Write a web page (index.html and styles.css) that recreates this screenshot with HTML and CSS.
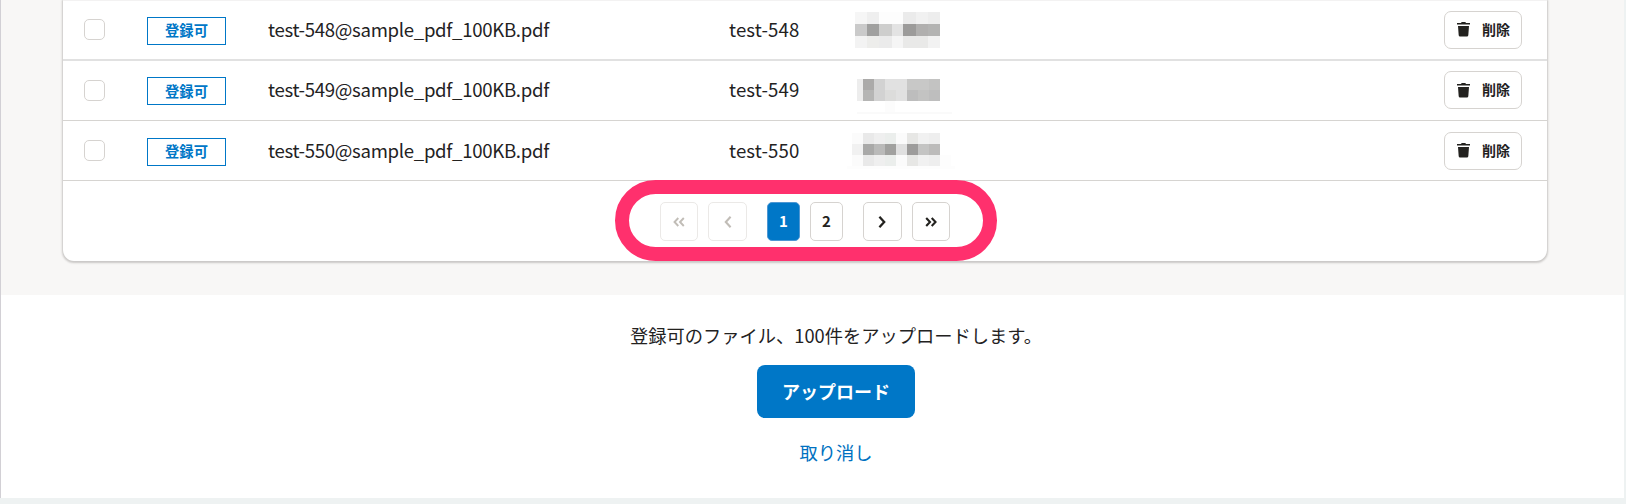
FILE: index.html
```html
<!DOCTYPE html>
<html lang="ja">
<head>
<meta charset="utf-8">
<title>アップロード</title>
<link rel="stylesheet" href="styles.css">
</head>
<body>
<svg class="defs" width="0" height="0">
  <symbol id="trash" viewBox="0 0 13 15"><path d="M0 1h4l.7-1h3.600L9 1h4v1.600H0zM1 4h11l-.7 9.200q-.1 1.400-1.400 1.400H3.100q-1.300 0-1.400-1.400z" fill="currentColor"/></symbol>
  <symbol id="left" viewBox="0 0 8 12"><path d="M6.600 .8 1.800 6l4.800 5.200" fill="none" stroke="currentColor" stroke-width="2.100"/></symbol>
  <symbol id="right" viewBox="0 0 8 12"><path d="M1.400 .8 6.200 6l-4.800 5.200" fill="none" stroke="currentColor" stroke-width="2.300"/></symbol>
  <symbol id="first" viewBox="0 0 12 10"><path d="M5.300 1 1.500 5l3.800 4M10.800 1 7 5l3.800 4" fill="none" stroke="currentColor" stroke-width="1.900"/></symbol>
  <symbol id="last" viewBox="0 0 12 10"><path d="M1.200 1 5 5 1.200 9M6.700 1l3.800 4-3.800 4" fill="none" stroke="currentColor" stroke-width="2.100"/></symbol>
</svg>
<main class="page">
  <section class="list">
    <div class="card">
      <div class="row">
        <div><span class="check"></span></div>
        <div><span class="badge">登録可</span></div>
        <div class="file">test-548@sample_pdf_100KB.pdf</div>
        <div class="name">test-548</div>
        <div class="masked">
          <svg width="85" height="36" viewBox="0 0 85 36" shape-rendering="crispEdges">
            <path fill="#f6f6f6" d="M0 0h12v12H0z"/><path fill="#efefef" d="M12 0h12v12H12z"/><path fill="#fdfdfd" d="M24 0h24v12H24z"/><path fill="#ebebeb" d="M48 0h13v12H48z"/><path fill="#f1f1f1" d="M61 0h12v12H61z"/><path fill="#ededed" d="M73 0h12v12H73z"/>
            <path fill="#cacaca" d="M0 12h12v12H0z"/><path fill="#a0a09f" d="M12 12h12v12H12z"/><path fill="#cececd" d="M24 12h13v12H24z"/><path fill="#e3e3e3" d="M37 12h11v12H37z"/><path fill="#9c9b9a" d="M48 12h13v12H48z"/><path fill="#b0afae" d="M61 12h12v12H61z"/><path fill="#b3b3b2" d="M73 12h12v12H73z"/>
            <path fill="#f3f3f3" d="M0 24h12v12H0z"/><path fill="#ededeb" d="M12 24h12v12H12z"/><path fill="#ebebeb" d="M24 24h13v12H24z"/><path fill="#f5f5f5" d="M37 24h11v12H37z"/><path fill="#e9e9e8" d="M48 24h25v12H48z"/><path fill="#f2f2f2" d="M73 24h12v12H73z"/>
          </svg>
        </div>
        <div class="action"><button class="delete"><svg width="13" height="15"><use href="#trash"/></svg><span>削除</span></button></div>
      </div>
      <div class="row">
        <div><span class="check"></span></div>
        <div><span class="badge">登録可</span></div>
        <div class="file">test-549@sample_pdf_100KB.pdf</div>
        <div class="name">test-549</div>
        <div class="masked">
          <svg width="98" height="50" viewBox="0 -14 98 50" shape-rendering="crispEdges">
            <path fill="#ededed" d="M2 0h6v22H2z"/><path fill="#abaaa9" d="M8 0h11v11H8z"/><path fill="#b5b5b4" d="M8 11h11v11H8z"/><path fill="#d2d2d2" d="M19 0h11v22H19z"/><path fill="#e1e1e1" d="M30 0h22v22H30z"/><path fill="#dcdcdb" d="M30 11h11v11H30z"/><path fill="#c8c8c7" d="M52 0h22v11H52z"/><path fill="#bdbdbd" d="M52 11h11v11H52z"/><path fill="#c3c3c2" d="M63 11h11v11H63zM74 0h11v11H74z"/><path fill="#bebebe" d="M74 11h11v11H74z"/>
            <path fill="#fcfcfc" d="M30 22h10v11H30z"/><path fill="#fafafa" d="M2 33h95v2H2z"/>
          </svg>
        </div>
        <div class="action"><button class="delete"><svg width="13" height="15"><use href="#trash"/></svg><span>削除</span></button></div>
      </div>
      <div class="row last">
        <div><span class="check"></span></div>
        <div><span class="badge">登録可</span></div>
        <div class="file">test-550@sample_pdf_100KB.pdf</div>
        <div class="name">test-550</div>
        <div class="masked">
          <svg class="wide" width="108" height="38" viewBox="0 0 108 38" shape-rendering="crispEdges">
            <path fill="#fbfbfb" d="M5 1h11v33H5zM49 1h11v33H49z"/><path fill="#fdfdfd" d="M0 34h109v3H0zM93 23h11v11H93z"/>
            <path fill="#e9e9e9" d="M16 1h11v33H16z"/><path fill="#efefef" d="M27 1h11v33H27z"/><path fill="#ebeeec" d="M38 1h11v33H38z"/><path fill="#e7e7e5" d="M60 1h11v33H60z"/><path fill="#f1f1f1" d="M71 1h11v33H71z"/><path fill="#eeeeee" d="M82 1h11v33H82z"/>
            <path fill="#f1f1f1" d="M5 12h11v11H5z"/><path fill="#a9a9a8" d="M16 12h11v11H16z"/><path fill="#babab9" d="M27 12h11v11H27z"/><path fill="#a1a19f" d="M38 12h11v11H38z"/><path fill="#e0e0e0" d="M49 12h11v11H49z"/><path fill="#9d9c9b" d="M60 12h11v11H60z"/><path fill="#c4c4c3" d="M71 12h11v11H71z"/><path fill="#bcbbba" d="M82 12h11v11H82z"/>
          </svg>
        </div>
        <div class="action"><button class="delete"><svg width="13" height="15"><use href="#trash"/></svg><span>削除</span></button></div>
      </div>
      <nav class="pager">
        <button class="step off"><svg width="12" height="10"><use href="#first"/></svg></button>
        <button class="step off"><svg width="8" height="12"><use href="#left"/></svg></button>
        <div class="pages"><button class="num current">1</button><button class="num">2</button></div>
        <button class="step"><svg width="8" height="12"><use href="#right"/></svg></button>
        <button class="step"><svg width="12" height="10"><use href="#last"/></svg></button>
      </nav>
      <div class="highlight"></div>
    </div>
  </section>
  <section class="submit">
    <p class="message">登録可のファイル、100件をアップロードします。</p>
    <button class="upload"><span>アップロード</span></button>
    <a class="cancel">取り消し</a>
  </section>
</main>
</body>
</html>
```
FILE: styles.css
```css
* { box-sizing: border-box; }
body {
  margin: 0;
  height: 504px;
  overflow: hidden;
  background: #eef2f2;
  color: #23221f;
  font-family: "Noto Sans CJK JP", sans-serif;
}
.defs { display: block; }
button { font: inherit; color: inherit; padding: 0; background: #fff; border: 1px solid #d6d3d0; }
svg { display: block; }
.page {
  width: 1624px;
  height: 498px;
  background: #fff;
  border-left: 1px solid #d2d0d5;
}
.list { height: 295px; padding: 0 77px 0 62px; background: #f8f7f6; }
.card {
  position: relative;
  height: 261px;
  background: #fff;
  border-radius: 0 0 11px 11px;
  box-shadow: 0 1px 2px 1px rgba(40, 35, 30, .22);
  clip-path: inset(0 -4px -6px -4px);
  border-top: 1px solid #f3f2f2;
}
.row {
  display: grid;
  grid-template-columns: 62px 121px 461px 133px 583px 124px;
  align-items: center;
  height: 60px;
  padding-bottom: 1px;
  border-bottom: 1px solid #d6d4d1;
}
.row:first-child { border-bottom: 2px solid #e1e1e1; }
.last { height: 60px; padding-bottom: 0; }
.check {
  display: block;
  width: 21px;
  height: 21px;
  margin-left: 21px;
  border: 1px solid #d6d3d0;
  border-radius: 5px;
}
.badge {
  display: flex;
  align-items: center;
  justify-content: center;
  width: 79px;
  height: 28px;
  margin: 2px 0 0 22px;
  border: 1px solid #0077c7;
  color: #0077c7;
  font-size: 14.300px;
  font-weight: 700;
  line-height: 1;
}
.file, .name { padding: 0 0 2px 22px; font-size: 18.600px; line-height: 28px; white-space: nowrap; }
.last .file, .last .name { padding-bottom: 1px; }
.file { letter-spacing: -.3px; }
.name { letter-spacing: .15px; }
.masked { padding-left: 15px; }
.masked .wide { margin-left: -8px; }
.delete {
  display: flex;
  align-items: center;
  gap: 12px;
  width: 78px;
  height: 38px;
  margin-left: 21px;
  padding-left: 12px;
  border-radius: 7px;
  font-size: 14px;
  font-weight: 700;
  line-height: 1;
}
.delete span { padding-bottom: 2px; }
.pager {
  display: flex;
  justify-content: center;
  gap: 10px;
  padding-top: 21px;
}
.pager button {
  display: flex;
  align-items: center;
  justify-content: center;
  height: 39px;
  border-radius: 5px;
  font-size: 15px;
  font-weight: 700;
  line-height: 1;
}
.pager .num { width: 32.500px; padding-bottom: 2px; }
.pager .step { width: 38.500px; }
.pager .off { color: #c1bdb7; border-color: #ebe9e7; }
.pager .current { background: #0077c7; border-color: #4e97d3; color: #fff; }
.pages { display: flex; gap: 10.500px; margin: 0 10.300px; }
.highlight {
  position: absolute;
  left: 552px;
  top: 179px;
  width: 382px;
  height: 81px;
  border: 14px solid #ff306d;
  border-radius: 41px;
  pointer-events: none;
}
.submit { display: flex; flex-direction: column; align-items: center; padding: 26px 0 0 47px; }
.message { margin: 0; font-size: 18.250px; line-height: 28px; white-space: nowrap; }
.upload {
  width: 158px;
  height: 53px;
  margin-top: 16px;
  padding-bottom: 2px;
  border: 0;
  border-radius: 8px;
  background: #0077c7;
  color: #fff;
  font-size: 18px;
  font-weight: 700;
}
.cancel { margin-top: 20px; font-size: 18.300px; line-height: 28px; color: #0071c1; }
```
